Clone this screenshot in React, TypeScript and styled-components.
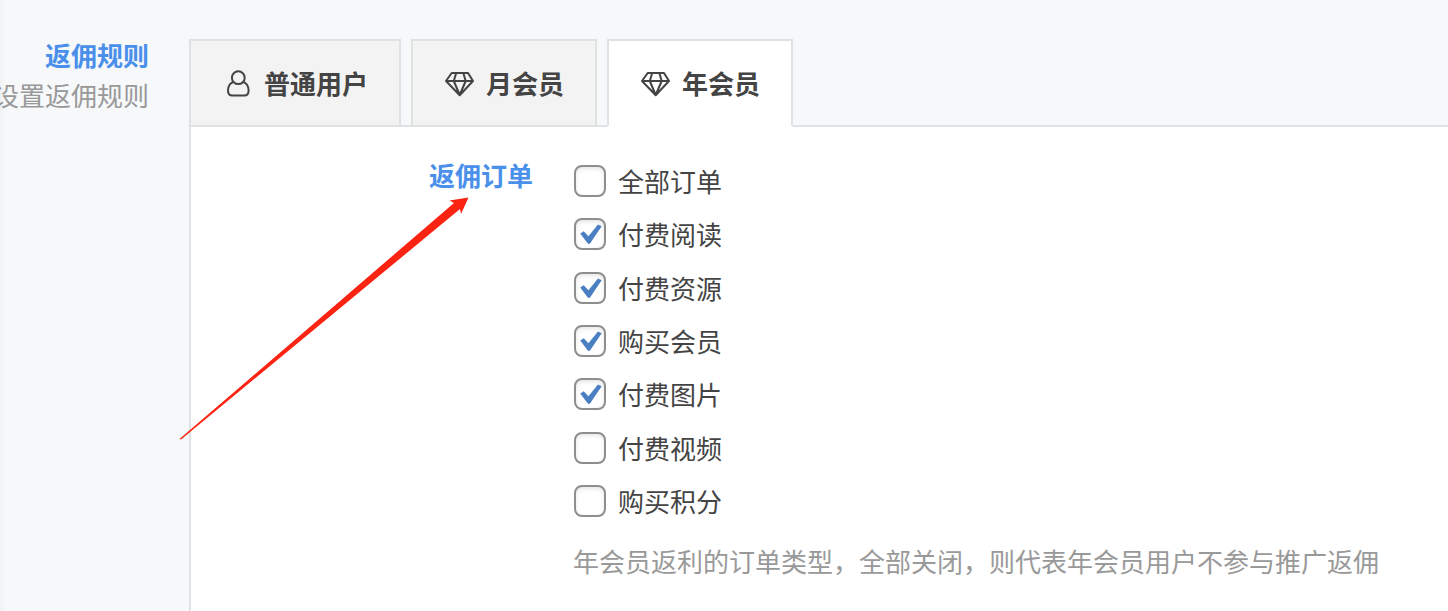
import React, { useState } from "react";
import styled, { createGlobalStyle } from "styled-components";

const colors = {
  page: "#f6f8fa",
  panel: "#ffffff",
  tab: "#f3f3f3",
  line: "#dfe2e2",
  title: "#4a90ea",
  text: "#444444",
  muted: "#999999",
  tick: "#4a7fc1",
  arrow: "#fb2312",
};

const GlobalStyle = createGlobalStyle`
  *, *::before, *::after { box-sizing: border-box; }
  body {
    margin: 0;
    background: ${colors.page};
    color: ${colors.text};
    font-family: "Noto Sans CJK SC", "Liberation Sans", sans-serif;
    font-size: 26px;
    line-height: 40px;
  }
`;

const Page = styled.main`
  position: relative;
  display: flex;
  min-height: 100vh;
  padding-top: 39px;
  overflow: hidden;
  background: linear-gradient(90deg, #f0f2f4, ${colors.page} 6px);
`;

const Aside = styled.header`
  display: flex;
  flex: 0 0 189px;
  flex-direction: column;
  align-items: flex-end;
  gap: 4px;
  min-width: 0;
  padding-right: 40px;
  white-space: nowrap;
`;

const Title = styled.h2`
  margin: 0;
  color: ${colors.title};
  font-size: 26px;
  font-weight: 700;
  line-height: 32px;
`;

const Hint = styled.p`
  margin: 0;
  color: ${colors.muted};
`;

const Content = styled.section`
  display: flex;
  flex: 1;
  flex-direction: column;
  min-width: 0;
`;

const TabList = styled.div`
  display: flex;
  gap: 10px;
`;

const Tab = styled.button<{ $active: boolean }>`
  display: flex;
  align-items: center;
  gap: 12px;
  height: 88px;
  margin-bottom: -2px;
  padding: 0 31px;
  border: 2px solid ${colors.line};
  border-bottom-color: ${(p) => (p.$active ? colors.panel : colors.line)};
  background: ${(p) => (p.$active ? colors.panel : colors.tab)};
  color: ${colors.text};
  font: inherit;
  font-weight: 700;
  white-space: nowrap;
  cursor: pointer;
  z-index: 1;
`;

const Icon = styled.svg`
  flex: none;
  width: 30px;
  height: 30px;
  fill: none;
  stroke: currentColor;
  stroke-width: 2;
  stroke-linejoin: round;
  stroke-linecap: round;
`;

const Panel = styled.div`
  display: flex;
  flex: 1;
  padding: 38px 32px 32px 0;
  border-top: 2px solid ${colors.line};
  border-left: 2px solid ${colors.line};
  background: ${colors.panel};
`;

const FieldLabel = styled.div`
  flex: 0 0 382px;
  padding-right: 40px;
  margin-top: -6px;
  text-align: right;
`;

const Field = styled.div`
  flex: 1;
  min-width: 0;
`;

const Options = styled.div`
  display: flex;
  flex-direction: column;
  justify-content: space-between;
  height: 352px;
`;

const Option = styled.label`
  display: flex;
  align-items: center;
  gap: 12px;
  height: 32px;
  cursor: pointer;
`;

const CheckFrame = styled.span`
  display: grid;
  flex: none;
  width: 32px;
  height: 32px;
  margin-left: 1px;

  & > * {
    grid-area: 1 / 1;
  }
`;

const Checkbox = styled.input`
  appearance: none;
  width: 32px;
  height: 32px;
  margin: 0;
  border: 2px solid #8e8e8e;
  border-radius: 8px;
  background: #ffffff;
  box-shadow: inset 0 2px 4px rgba(0, 0, 0, 0.1);
  cursor: pointer;
`;

const Tick = styled.svg`
  width: 32px;
  height: 32px;
  fill: ${colors.tick};
  pointer-events: none;
`;

const Note = styled.p`
  margin: 24px 0 0;
  color: ${colors.muted};
`;

const Arrow = styled.svg`
  position: absolute;
  top: 196px;
  left: 178px;
  z-index: 2;
  width: 294px;
  height: 246px;
  fill: ${colors.arrow};
  pointer-events: none;
`;

const UserIcon = () => (
  <Icon viewBox="0 0 30 30" aria-hidden="true">
    <circle cx="16.3" cy="9.7" r="6.400" />
    <path d="M11.300 14C7.500 15.400 6 18.600 6 22.600c0 3.500 1.400 5 4.200 5h12.200c2.800 0 4.200-1.500 4.200-5 0-4-1.500-7.200-5.300-8.600" />
  </Icon>
);

const DiamondIcon = () => (
  <Icon viewBox="0 0 30 30" aria-hidden="true">
    <path d="M7.700 5h16.300L29 13 15.700 27.300 2 13zM2 13h27M12.200 5L9.800 13l5.900 14 6-14-2.400-8" />
  </Icon>
);

const tabs = [
  { name: "普通用户", icon: UserIcon },
  { name: "月会员", icon: DiamondIcon },
  { name: "年会员", icon: DiamondIcon },
];

const orders = ["全部订单", "付费阅读", "付费资源", "购买会员", "付费图片", "付费视频", "购买积分"];

export default function App() {
  const [active, setActive] = useState(2);
  const [checked, setChecked] = useState([false, true, true, true, true, false, false]);

  const toggle = (index: number) =>
    setChecked((values) => values.map((value, i) => (i === index ? !value : value)));

  return (
    <>
      <GlobalStyle />
      <Page>
        <Aside>
          <Title>返佣规则</Title>
          <Hint>设置返佣规则</Hint>
        </Aside>
        <Content>
          <TabList role="tablist">
            {tabs.map(({ name, icon: TabIcon }, i) => (
              <Tab
                key={name}
                type="button"
                role="tab"
                aria-selected={i === active}
                $active={i === active}
                onClick={() => setActive(i)}
              >
                <TabIcon />
                {name}
              </Tab>
            ))}
          </TabList>
          <Panel role="tabpanel">
            <FieldLabel>
              <Title id="order-types">返佣订单</Title>
            </FieldLabel>
            <Field>
              <Options role="group" aria-labelledby="order-types">
                {orders.map((name, i) => (
                  <Option key={name}>
                    <CheckFrame>
                      <Checkbox type="checkbox" checked={checked[i]} onChange={() => toggle(i)} />
                      {checked[i] && (
                        <Tick viewBox="0 0 32 32" aria-hidden="true">
                          <path d="M6.200 15.500l3.600-2.200 4.600 4.900L24 6.500l3.700 1.800L16.200 25.200q-1.300 1.400-2.600 0z" />
                        </Tick>
                      )}
                    </CheckFrame>
                    {name}
                  </Option>
                ))}
              </Options>
              <Note>年会员返利的订单类型，全部关闭，则代表年会员用户不参与推广返佣</Note>
            </Field>
          </Panel>
        </Content>
        <Arrow viewBox="0 0 294 246" aria-hidden="true">
          <path d="M1.500 243L276 7l-4.500-2.500L290.500 1.500 283 18l-1-5L3 243.500z" />
        </Arrow>
      </Page>
    </>
  );
}
